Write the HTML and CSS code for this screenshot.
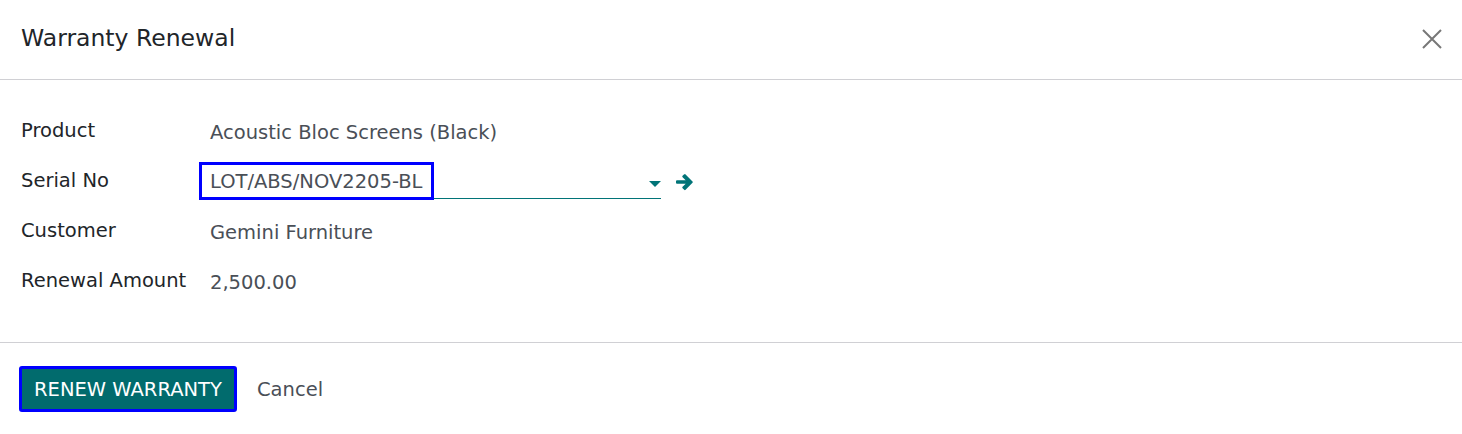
FILE: index.html
```html
<!DOCTYPE html>
<html>
<head>
<meta charset="utf-8">
<link rel="stylesheet" href="styles.css">
</head>
<body>
<div class="dialog">
  <header class="head">
    <h1 class="title">Warranty Renewal</h1>
    <button class="close" aria-label="Close">
      <svg width="20" height="20" viewBox="0 0 20 20"><path d="M1 1L19 19M19 1L1 19" stroke="#777" stroke-width="2" fill="none"/></svg>
    </button>
  </header>
  <main class="body">
    <div class="grid">
      <div class="label">Product</div>
      <div class="value">Acoustic Bloc Screens (Black)</div>

      <div class="label">Serial No</div>
      <div class="value">
        <div class="field-wrap">
          <div class="field">
            <span class="focus">LOT/ABS/NOV2205-BL</span>
            <svg class="caret" width="12" height="6" viewBox="0 0 12 6"><path d="M0 0H12L6 6Z" fill="#017478"/></svg>
          </div>
          <svg class="arrow" width="17" height="18" viewBox="0 0 17 18"><path d="M8.2 1.2L6.6 2.8a1 1 0 0 0 0 1.4L9.7 7.2H1a1 1 0 0 0-1 1v1.6a1 1 0 0 0 1 1h8.7L6.6 13.8a1 1 0 0 0 0 1.4l1.6 1.6a1 1 0 0 0 1.4 0l6.9-7a1 1 0 0 0 0-1.4l-6.9-7a1 1 0 0 0-1.4 0z" fill="#017478"/></svg>
        </div>
      </div>

      <div class="label">Customer</div>
      <div class="value">Gemini Furniture</div>

      <div class="label">Renewal Amount</div>
      <div class="value">2,500.00</div>
    </div>
  </main>
  <footer class="foot">
    <button class="primary">RENEW WARRANTY</button>
    <button class="link">Cancel</button>
  </footer>
</div>
</body>
</html>
```
FILE: styles.css
```css
* { box-sizing: border-box; }
html, body { margin: 0; padding: 0; background: #fff; }
body {
  font-family: "DejaVu Sans", "Liberation Sans", sans-serif;
  color: #212529;
  width: 1462px;
  height: 434px;
  overflow: hidden;
}
.head {
  height: 80px;
  border-bottom: 1px solid #d0d0d4;
  display: flex;
  align-items: center;
  justify-content: space-between;
  padding: 0 20px 2px 21px;
}
.title {
  margin: 0;
  font-size: 23.5px;
  font-weight: normal;
  color: #212529;
  line-height: 1;
}
.close {
  border: 0;
  background: none;
  padding: 0;
  width: 20px;
  height: 20px;
  display: block;
}
.close svg { display: block; }
.body {
  padding: 26px 0 36px 21px;
  border-bottom: 1px solid #d0d0d4;
}
.grid {
  display: grid;
  grid-template-columns: 189px 1fr;
  grid-auto-rows: 50px;
  align-items: center;
}
.label {
  font-size: 19.5px;
  color: #212529;
  margin-top: -2px;
}
.value {
  font-size: 19.5px;
  color: #4a4f57;
  margin-top: 2px;
}
.field-wrap {
  display: flex;
  align-items: center;
  margin-left: -11px;
  margin-top: -2px;
}
.field {
  width: 462px;
  height: 36px;
  border-bottom: 1px solid #017478;
  display: flex;
  align-items: flex-start;
  justify-content: space-between;
}
.focus {
  height: 32px;
  display: flex;
  align-items: center;
  padding: 1px 9px 0 8px;
  margin: 2px 0 0 3px;
  outline: 3px solid #0000ff;
  color: #4a4f57;
  background: #fff;
}
.caret { display: block; margin-top: 18px; }
.arrow { display: block; margin-left: 15px; margin-top: 2px; }
.foot {
  display: flex;
  align-items: center;
  padding: 23px 0 0 19px;
}
.primary {
  font-family: inherit;
  font-size: 19.5px;
  color: #fff;
  background: #016b6d;
  border: 3px solid #0000ff;
  border-radius: 3px;
  height: 46px;
  width: 218px;
  padding: 0;
}
.link {
  font-family: inherit;
  font-size: 19.5px;
  color: #4a4f57;
  background: none;
  border: 0;
  padding: 0 0 0 20px;
  height: 46px;
}
```
